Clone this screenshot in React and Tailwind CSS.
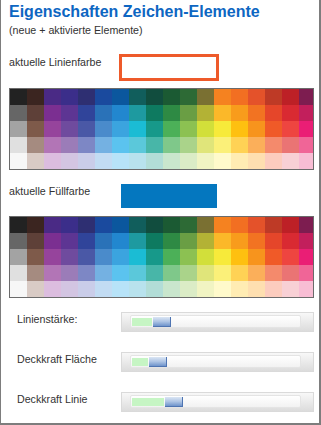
import React from 'react';

const palette = [
  ['#222222', '#3b2520', '#4a2a85', '#3b2e8a', '#2e2f72', '#1a4a9e', '#0b579e', '#115e5c', '#114d3e', '#1b5a33', '#2d6a35', '#7a7032', '#f58220', '#f26f22', '#e4522a', '#be3a26', '#bd2026', '#7d1d50'],
  ['#666666', '#5e4038', '#7b2f91', '#5d3593', '#30449a', '#2a72b8', '#2287cf', '#1e9aa0', '#0e7a60', '#2e8a44', '#6a9e44', '#b3b235', '#fbb829', '#f89c1c', '#f27322', '#e5462a', '#d92a32', '#c21f5c'],
  ['#a3a3a3', '#7e5a4a', '#96449c', '#6f4b9e', '#4a58a6', '#4a8bcb', '#3ba4df', '#1bbcd4', '#17998a', '#4cb058', '#8cc152', '#d2df3a', '#f7ea3a', '#fec010', '#f7941d', '#f05a28', '#ee4540', '#ea1e75'],
  ['#e0e0e0', '#a58b80', '#b275b6', '#9b7cb8', '#7d87c5', '#74b1e2', '#5bc3ef', '#5bc8da', '#48b6a8', '#7fc88a', '#aad38a', '#e0e57a', '#fbf079', '#ffd255', '#fbaf5a', '#f48a6c', '#ea7474', '#f06597'],
  ['#f7f7f7', '#d9cbc5', '#dcbddf', '#d3c5e2', '#cacde9', '#c2dcf3', '#b7e3f8', '#b8e2ed', '#b2ddd7', '#c9e6cd', '#dbecc6', '#f1f4c3', '#fffacb', '#ffecb3', '#fedfb0', '#fcccbe', '#f8d0d5', '#f8bdd4'],
];

function Palette({ className = '' }) {
  return (
    <div className={`w-[305px] border border-[#6b6b6b] overflow-hidden ${className}`}>
      {palette.map((row, r) => (
        <div key={r} className="flex h-[16px]">
          {row.map((c, i) => (
            <div key={i} className="w-[17px] h-[16px] shrink-0" style={{ backgroundColor: c }} />
          ))}
        </div>
      ))}
    </div>
  );
}

function Slider({ label, fill }) {
  return (
    <div className="flex items-start h-[20px]">
      <div className="w-[104px] pt-[1px] text-[10.67px] leading-[13px] text-[#333]">{label}</div>
      <div className="w-[193px] h-[20px] border border-[#dadada] bg-gradient-to-b from-[#f8f8f8] to-[#dcdcdc] pl-[8px] pt-[2px]">
        <div className="w-[171px] h-[13px] border border-[#e4e4e4] rounded-[2px] bg-gradient-to-b from-white to-[#f2f2f2] flex items-center pl-[1px]">
          <div className="h-[8px] bg-[#c6f5c4]" style={{ width: fill }} />
          <div className="ml-[1px] w-[18px] h-[10px] bg-gradient-to-b from-[#dbe6f4] via-[#aec4e4] to-[#6f94cb] border-r border-b border-[#4e74b2]" />
        </div>
      </div>
    </div>
  );
}

export default function App() {
  return (
    <div className="w-[321px] h-[425px] bg-white border-l border-r-2 border-b-2 border-[#7d7d7d] pl-[8px] pt-[2px] font-['Liberation_Sans',Arial,sans-serif]">
      <h1 className="text-[16px] leading-[19px] font-bold text-[#0d66c2]">Eigenschaften Zeichen-Elemente</h1>
      <p className="mt-[3px] text-[10.67px] leading-[13px] text-[#333]">(neue + aktivierte Elemente)</p>

      <div className="mt-[17px] flex items-start">
        <div className="w-[110px] mt-[2px] text-[10.67px] leading-[13px] text-[#333]">aktuelle Linienfarbe</div>
        <div className="w-[100px] h-[27px] border-[3px] border-[#ee5a2a] bg-white" />
      </div>

      <Palette className="mt-[7px]" />

      <div className="mt-[14px] flex items-start">
        <div className="w-[112px] mt-[1px] text-[10.67px] leading-[13px] text-[#333]">aktuelle Füllfarbe</div>
        <div className="w-[96px] h-[24px] bg-[#0477bf]" />
      </div>

      <Palette className="mt-[8px]" />

      <div className="mt-[14px] pl-[8px] flex flex-col gap-[20px]">
        <Slider label="Linienstärke:" fill="20px" />
        <Slider label="Deckkraft Fläche" fill="16px" />
        <Slider label="Deckkraft Linie" fill="32px" />
      </div>
    </div>
  );
}
